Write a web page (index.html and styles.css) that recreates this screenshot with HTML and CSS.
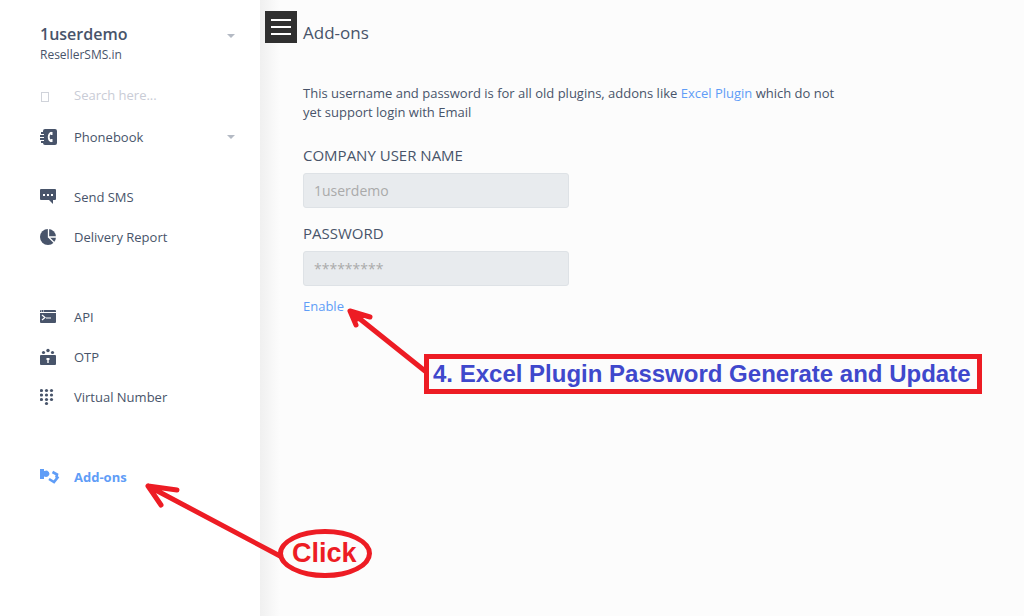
FILE: index.html
```html
<!DOCTYPE html>
<html lang="en">
<head>
<meta charset="utf-8">
<meta name="viewport" content="width=device-width, initial-scale=1">
<title>Add-ons - ResellerSMS.in</title>
<link rel="stylesheet" href="styles.css">
</head>
<body>
<div class="app">
  <aside class="sidebar">
    <button class="account" type="button">
      <span class="account-text">
        <span class="account-name">1userdemo</span>
        <span class="account-site">ResellerSMS.in</span>
      </span>
      <span class="caret"></span>
    </button>
    <div class="search">
      <span class="search-icon"></span>
      <input class="search-input" type="text" placeholder="Search here..." aria-label="Search">
    </div>
    <nav class="nav">
      <div class="nav-group">
        <a class="nav-item" href="#">
          <svg class="icon" viewBox="0 0 20 20"><path fill="currentColor" d="M5 2h10q2 0 2 2v12q0 2-2 2H5q-2 0-2-2H1v-2h3v-1H0v-2h4v-1H0V8h4V7H1V5h2V4q0-2 2-2z"/><path d="M11.500 5.500Q8.700 6.500 8.700 10t2.800 4.500" fill="none" stroke="#fff" stroke-width="1.800"/><path d="M10.500 5h2v3h-2zM10.500 12h2v3h-2z" fill="#fff"/></svg>
          <span class="nav-label">Phonebook</span>
          <span class="caret"></span>
        </a>
      </div>
      <div class="nav-group">
        <a class="nav-item" href="#">
          <svg class="icon" viewBox="0 0 20 20"><path fill="currentColor" d="M1 2h14q1 0 1 1v9q0 1-1 1h-2v4l-4-4H1q-1 0-1-1V3q0-1 1-1z"/><path d="M3 7h2v2H3zM7 7h2v2H7zM11 7h2v2h-2z" fill="#fff"/></svg>
          <span class="nav-label">Send SMS</span>
        </a>
        <a class="nav-item" href="#">
          <svg class="icon" viewBox="0 0 20 20"><circle cx="8" cy="10" r="8" fill="currentColor"/><path d="M8.500 1v9H17M8.500 10l6 6" fill="none" stroke="#fff" stroke-width="1.300"/></svg>
          <span class="nav-label">Delivery Report</span>
        </a>
      </div>
      <div class="nav-group">
        <a class="nav-item" href="#">
          <svg class="icon" viewBox="0 0 20 20"><path fill="currentColor" d="M1 3h14q1 0 1 1v1H0V4q0-1 1-1zM0 6h16v9q0 1-1 1H1q-1 0-1-1z"/><path d="M2 8l3 2.500L2 13M6 11h5" fill="none" stroke="#fff" stroke-width="1.200"/><path d="M1 4h1M3 4h1" stroke="#fff"/></svg>
          <span class="nav-label">API</span>
        </a>
        <a class="nav-item" href="#">
          <svg class="icon" viewBox="0 0 20 20"><path fill="currentColor" d="M1 8h14q1 0 1 1v8q0 1-1 1H1q-1 0-1-1V9q0-1 1-1z"/><g fill="currentColor"><circle cx="3.500" cy="5.500" r="1.600"/><circle cx="8" cy="3.500" r="1.700"/><circle cx="12.500" cy="5.500" r="1.600"/></g><path d="M6.500 11h3v2H8.700v3H7.300v-3h-.8z" fill="#fff"/></svg>
          <span class="nav-label">OTP</span>
        </a>
        <a class="nav-item" href="#">
          <svg class="icon" viewBox="0 0 20 20"><g fill="currentColor"><circle cx="1.500" cy="3.500" r="1.600"/><circle cx="6.500" cy="3.500" r="1.600"/><circle cx="11.500" cy="3.500" r="1.600"/><circle cx="1.500" cy="8" r="1.600"/><circle cx="6.500" cy="8" r="1.600"/><circle cx="11.500" cy="8" r="1.600"/><circle cx="1.500" cy="12.500" r="1.600"/><circle cx="6.500" cy="12.500" r="1.600"/><circle cx="11.500" cy="12.500" r="1.600"/><circle cx="6.500" cy="16.500" r="1.600"/></g></svg>
          <span class="nav-label">Virtual Number</span>
        </a>
      </div>
      <div class="nav-group">
        <a class="nav-item nav-item-active" href="#">
          <svg class="icon" viewBox="0 0 20 20"><path fill="currentColor" d="M0 2h4v2l3-.500q2.500 1 2.500 3.500-1 3-3.500 3l-2-.500V12H0z"/><path d="M12.500 5l4.500 2.500-.500 2 1 1L14 15l-5-3" fill="none" stroke="currentColor" stroke-width="2.600"/></svg>
          <span class="nav-label">Add-ons</span>
        </a>
      </div>
    </nav>
  </aside>
  <main class="main">
    <header class="topbar">
      <button class="menu-button" type="button" aria-label="Toggle menu">
        <svg class="menu-icon" viewBox="0 0 32 32"><path d="M6 9h20M6 16h20M6 23h20" stroke="#fff" stroke-width="2"/></svg>
      </button>
      <h1 class="title">Add-ons</h1>
    </header>
    <form class="content">
      <p class="intro">This username and password is for all old plugins, addons like <a class="link" href="#">Excel Plugin</a> which do not yet support login with Email</p>
      <label class="field-label" for="company">COMPANY USER NAME</label>
      <input class="field" id="company" type="text" value="1userdemo" disabled>
      <label class="field-label" for="password">PASSWORD</label>
      <input class="field" id="password" type="text" value="*********" disabled>
      <a class="link enable" href="#">Enable</a>
    </form>
  </main>
  <svg class="arrows" viewBox="0 0 1024 616" width="1024" height="616">
    <g fill="none" stroke="#ed1c24" stroke-width="5" stroke-linecap="round" stroke-linejoin="round">
      <path d="M425 371L350 311l20 6M350 311l6 14M352 313l10 3-5 3z"/>
      <path d="M280 556L148 486l29 4M148 486l13 19"/>
    </g>
  </svg>
  <div class="note note-box">4. Excel Plugin Password Generate and Update</div>
  <div class="note note-oval">Click</div>
</div>
</body>
</html>
```
FILE: styles.css
```css
* {
  box-sizing: border-box;
}

body {
  margin: 0;
  background: #fcfcfc;
  color: #48546a;
  font: 13px/20px "Open Sans", "Noto Sans", sans-serif;
}

input,
button {
  font: inherit;
  color: inherit;
}

.app {
  position: relative;
  display: flex;
  min-height: 100vh;
  overflow: hidden;
}

.sidebar {
  flex: 0 0 260px;
  min-width: 0;
  padding: 22px 24px 0 40px;
  background: #fff;
}

.account {
  display: flex;
  align-items: center;
  width: 100%;
  padding: 0;
  border: 0;
  background: none;
  text-align: left;
}

.account-text {
  flex: 1;
}

.account-name,
.account-site {
  display: block;
}

.account-name {
  font-size: 16px;
  font-weight: 600;
  line-height: 24px;
}

.account-site {
  font-size: 12px;
  line-height: 18px;
}

.caret {
  margin-right: 1px;
  border: 4px solid transparent;
  border-top-color: #b4bac4;
  border-bottom: 0;
}

.account .caret {
  margin-bottom: 14px;
}

.search {
  display: flex;
  align-items: center;
  height: 40px;
  margin-top: 11px;
}

.search-icon {
  width: 8px;
  height: 10px;
  margin: 4px 25px 0 1px;
  border: 1px solid #d0d3da;
}

.search-input {
  flex: 1;
  min-width: 0;
  padding: 0;
  border: 0;
  background: none;
}

.search-input::placeholder {
  color: #c9ccd6;
}

.nav {
  display: flex;
  flex-direction: column;
  gap: 40px;
  padding-top: 2px;
}

.nav-group:first-child {
  margin-bottom: -20px;
}

.nav-item {
  display: flex;
  align-items: center;
  height: 40px;
  color: inherit;
  text-decoration: none;
}

.nav-item-active {
  color: #5f9df7;
  font-weight: 700;
}

.icon {
  width: 20px;
  height: 20px;
  margin-right: 14px;
}

.nav-label {
  flex: 1;
}

.main {
  flex: 1;
  min-width: 0;
  padding: 11px 5px;
  background: linear-gradient(90deg, #f0f0f0, #fcfcfc 20px);
}

.topbar {
  display: flex;
  align-items: flex-start;
  gap: 6px;
}

.menu-button {
  width: 32px;
  height: 32px;
  padding: 0;
  border: 0;
  background: #303030;
}

.menu-icon {
  display: block;
}

.title {
  margin: 10px 0 0;
  font-size: 17px;
  font-weight: 400;
  line-height: 24px;
}

.content {
  display: flex;
  flex-direction: column;
  align-items: flex-start;
  max-width: 580px;
  padding: 39px 0 0 38px;
}

.intro {
  margin: 0 0 22px;
  line-height: 19px;
}

.link {
  color: #5f9df7;
  text-decoration: none;
}

.field-label {
  margin-bottom: 7px;
  font-size: 15px;
  line-height: 22px;
}

.field {
  width: 266px;
  height: 35px;
  margin-bottom: 14px;
  padding: 0 10px;
  border: 1px solid #dee2e6;
  border-radius: 3px;
  background: #e8ebee;
  color: #aaa;
  font-size: 14px;
}

.enable {
  margin-top: -4px;
}

/* Callouts drawn over the page */
.arrows {
  position: absolute;
  top: 0;
  left: 0;
  pointer-events: none;
}

.note {
  position: absolute;
  border: 5px solid #ed1c24;
  font-family: "Liberation Sans", Arial, sans-serif;
  font-weight: 700;
  white-space: nowrap;
}

.note-box {
  top: 354px;
  left: 424px;
  padding: 0 6px 0 4px;
  color: #3f48cc;
  font-size: 24px;
  line-height: 30px;
}

.note-oval {
  top: 529px;
  left: 278px;
  padding: 0 10px 0 9px;
  border-radius: 50%;
  color: #ed1c24;
  font-size: 27px;
  line-height: 39px;
}
```
